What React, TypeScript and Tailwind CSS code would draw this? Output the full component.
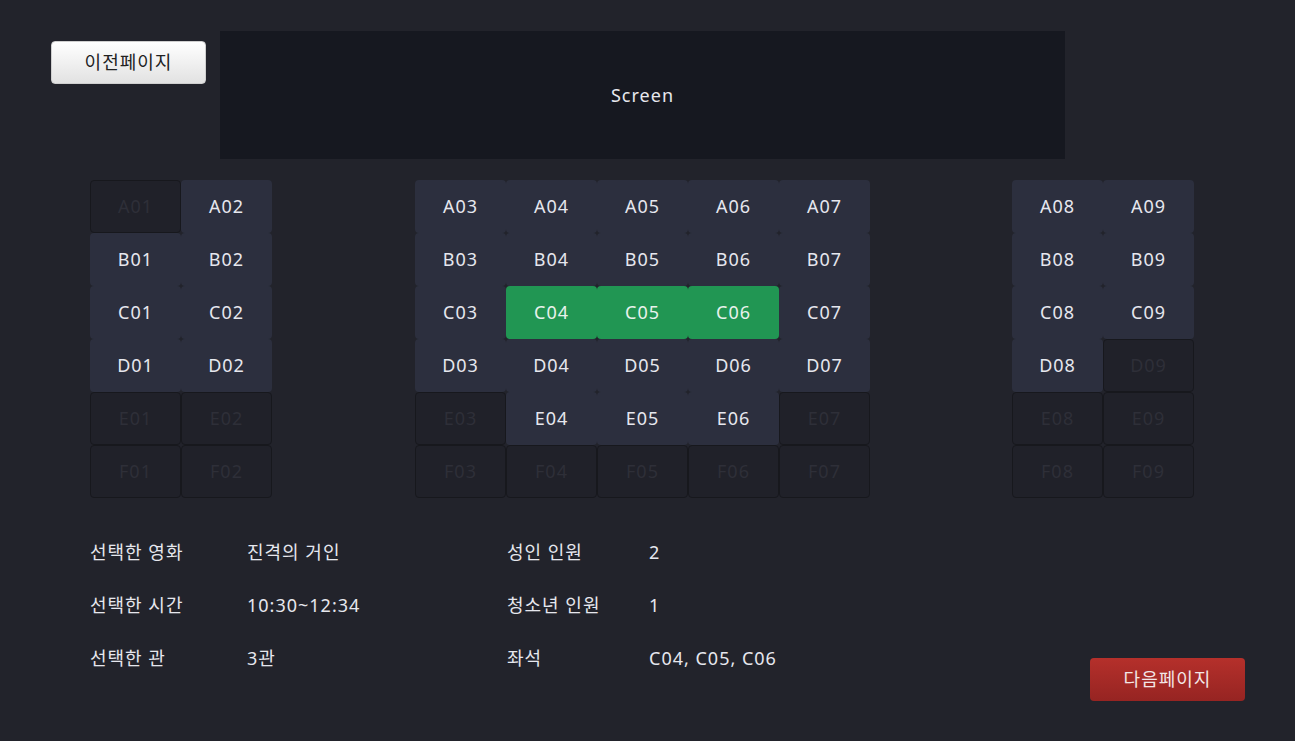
const rows = ["A", "B", "C", "D", "E", "F"];

const available = new Set([
  "A02", "A03", "A04", "A05", "A06", "A07", "A08", "A09",
  "B01", "B02", "B03", "B04", "B05", "B06", "B07", "B08", "B09",
  "C01", "C02", "C03", "C07", "C08", "C09",
  "D01", "D02", "D03", "D04", "D05", "D06", "D07", "D08",
  "E04", "E05", "E06",
]);
const selected = new Set(["C04", "C05", "C06"]);

const blocks = [
  [1, 2],
  [3, 4, 5, 6, 7],
  [8, 9],
];

function Seat({ id }: { id: string }) {
  if (selected.has(id)) {
    return (
      <div className="flex h-[53px] w-[91px] items-center justify-center rounded-[4px] bg-[#219653] text-[#e8f2ec]">
        {id}
      </div>
    );
  }
  if (available.has(id)) {
    return (
      <div className="flex h-[53px] w-[91px] items-center justify-center rounded-[4px] bg-[#2c2f3e] text-[#e6e7ee]">
        {id}
      </div>
    );
  }
  return (
    <div className="flex h-[53px] w-[91px] items-center justify-center rounded-[4px] border border-[#17181d] bg-[#202129] text-[#2e2f38]">
      {id}
    </div>
  );
}

const info = [
  ["선택한 영화", "진격의 거인", "성인 인원", "2"],
  ["선택한 시간", "10:30~12:34", "청소년 인원", "1"],
  ["선택한 관", "3관", "좌석", "C04, C05, C06"],
];

export default function App() {
  return (
    <div
      className="h-[741px] w-[1295px] overflow-hidden bg-[#22232b] text-[18px] tracking-[1px] text-[#e6e7ee]"
      style={{ fontFamily: '"Noto Sans", "Noto Sans CJK KR", sans-serif' }}
    >
      <div className="flex pt-[31px]">
        <div className="w-[220px] pl-[51px] pt-[10px]">
          <button className="h-[43px] w-[155px] rounded-[4px] border border-[#cfcfcf] bg-gradient-to-b from-[#ffffff] to-[#e2e2e2] text-[#222]">
            이전페이지
          </button>
        </div>
        <div className="flex h-[128px] w-[845px] items-center justify-center bg-[#161820] text-[#e8e8ee]">
          Screen
        </div>
      </div>

      <div className="mt-[21px] flex pl-[90px]">
        {blocks.map((cols, bi) => (
          <div key={bi} className={bi === 0 ? "" : bi === 1 ? "ml-[143px]" : "ml-[142px]"}>
            {rows.map((r) => (
              <div key={r} className="flex">
                {cols.map((c) => {
                  const id = `${r}0${c}`;
                  return <Seat key={id} id={id} />;
                })}
              </div>
            ))}
          </div>
        ))}
      </div>

      <div className="relative mt-[28px] pl-[90px]">
        {info.map((row) => (
          <div key={row[0]} className="flex h-[53px] items-center">
            <div className="w-[157px]">{row[0]}</div>
            <div className="w-[260px]">{row[1]}</div>
            <div className="w-[142px]">{row[2]}</div>
            <div>{row[3]}</div>
          </div>
        ))}
        <button className="absolute right-[50px] top-[132px] h-[43px] w-[155px] rounded-[4px] bg-gradient-to-b from-[#b5302b] to-[#962422] text-[#f3e6e6]">
          다음페이지
        </button>
      </div>
    </div>
  );
}
